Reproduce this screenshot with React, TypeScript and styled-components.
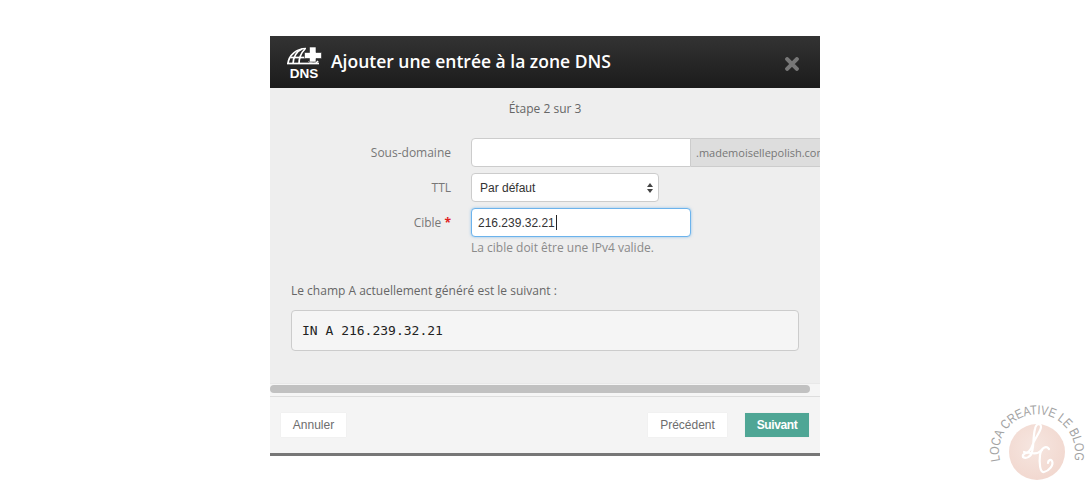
import { createGlobalStyle, styled } from 'styled-components'

const GlobalStyle = createGlobalStyle`
  html, body {
    margin: 0;
    padding: 0;
    background: #fff;
  }
  body {
    font-family: 'Open Sans', sans-serif;
  }
`

const Page = styled.div`
  position: relative;
  width: 1090px;
  height: 492px;
  padding: 36px 0 0 270px;
  box-sizing: border-box;
  overflow: hidden;
`

const Modal = styled.div`
  width: 550px;
  height: 420px;
  display: flex;
  flex-direction: column;
  overflow: hidden;
  background: #eee;
  border-bottom: 3px solid #777;
  box-sizing: border-box;
`

const Header = styled.div`
  height: 52px;
  flex: none;
  display: flex;
  align-items: center;
  padding: 0 19px 0 17px;
  background: linear-gradient(#333, #1b1b1b);
`

const LogoIcon = styled.svg`
  width: 35px;
  height: 36px;
  margin-top: 4px;
  flex: none;
`

const Title = styled.h3`
  margin: -2px 0 0 9px;
  flex: 1;
  color: #fff;
  font-size: 17.5px;
  font-weight: 600;
  line-height: 52px;
`

const Close = styled.svg`
  width: 14px;
  height: 14px;
  margin: 3px 2px 0 0;
`

const Body = styled.div`
  flex: 1;
  display: flex;
  flex-direction: column;
`

const Step = styled.div`
  margin-top: 12px;
  text-align: center;
  color: #666;
  font-size: 12px;
  font-weight: 400;
  line-height: 17px;
`

const Form = styled.div`
  margin-top: 21px;
  display: flex;
  flex-direction: column;
  gap: 6px;
`

const Row = styled.div`
  display: flex;
  align-items: center;
`

const Label = styled.label`
  width: 181px;
  flex: none;
  text-align: right;
  color: #777;
  font-size: 12px;
  line-height: 17px;
`

const Required = styled.span`
  color: #e02020;
  font-weight: 700;
`

const Control = styled.div<{ $focused?: boolean; $width: number; $joined?: boolean }>`
  margin-left: 20px;
  width: ${({ $width }) => $width}px;
  height: 29px;
  flex: none;
  box-sizing: border-box;
  display: flex;
  align-items: center;
  padding: 0 5px 0 6px;
  background: #fff;
  color: #333;
  font-family: 'Liberation Sans', sans-serif;
  font-size: 12px;
  border: 1px solid ${({ $focused }) => ($focused ? '#6cb3ec' : '#ccc')};
  border-radius: ${({ $joined }) => ($joined ? '4px 0 0 4px' : '4px')};
  box-shadow: ${({ $focused }) => ($focused ? '0 0 3px rgba(102, 175, 233, 0.7)' : 'none')};
`

const SelectValue = styled.span`
  flex: 1;
  padding-left: 2px;
`

const Caret = styled.span`
  width: 1px;
  height: 15px;
  margin-left: 1px;
  background: #222;
`

const Addon = styled.div`
  width: 129px;
  height: 29px;
  flex: none;
  box-sizing: border-box;
  display: flex;
  align-items: center;
  padding-left: 5px;
  overflow: hidden;
  white-space: nowrap;
  background: #ddd;
  border: 1px solid #ccc;
  border-left: none;
  border-right: none;
  color: #777;
  font-size: 11px;
`

const Help = styled.div`
  margin: 2px 0 0 201px;
  color: #8a8a8a;
  font-size: 12px;
  line-height: 17px;
`

const Generated = styled.div`
  margin: 26px 21px 0;
`

const GeneratedLabel = styled.div`
  color: #666;
  font-size: 12px;
  line-height: 17px;
`

const Code = styled.pre`
  margin: 11px 0 0;
  height: 41px;
  box-sizing: border-box;
  padding: 0 10px;
  display: flex;
  align-items: center;
  background: #f5f5f5;
  border: 1px solid #ccc;
  border-radius: 4px;
  color: #222;
  font-family: 'DejaVu Sans Mono', monospace;
  font-size: 13px;
`

const ScrollTrack = styled.div`
  margin-top: 32px;
  height: 13px;
  box-sizing: border-box;
  padding: 1px 10px 0 0;
  background: #f5f5f5;
  border-top: 1px solid #e8e8e8;
`

const ScrollThumb = styled.div`
  height: 8px;
  background: #c1c1c1;
  border-radius: 4px;
`

const Footer = styled.div`
  flex: 1;
  display: flex;
  align-items: center;
  gap: 18px;
  padding: 0 11px;
  background: #f4f4f4;
  border-top: 1px solid #ddd;
`

const Button = styled.button<{ $primary?: boolean; $push?: boolean; $width: number }>`
  width: ${({ $width }) => $width}px;
  height: 24px;
  padding: 0;
  margin-left: ${({ $push }) => ($push ? 'auto' : '0')};
  border: none;
  border-radius: 0;
  background: ${({ $primary }) => ($primary ? '#4fa695' : '#fff')};
  color: ${({ $primary }) => ($primary ? '#fff' : '#6d6d6d')};
  font-family: 'Liberation Sans', sans-serif;
  font-size: 12px;
  font-weight: ${({ $primary }) => ($primary ? 700 : 400)};
  letter-spacing: ${({ $primary }) => ($primary ? '-0.4px' : '0')};
  box-shadow: 0 0 1px rgba(0, 0, 0, 0.08);
`

const Badge = styled.svg`
  position: absolute;
  left: 988px;
  top: 402px;
  width: 102px;
  height: 84px;
`

const DnsIcon = () => (
  <LogoIcon viewBox="0 0 35 36">
    <g fill="none" stroke="#fff" strokeWidth="1.700">
      <path d="M1 18 C1.500 9 10 2.500 19 2.500" />
      <path d="M6 18 C6 11 10 5 15 3" />
      <path d="M12 18 C12 12 14 7 18 3" />
      <path d="M3.500 11.500 H19" />
      <path d="M0 17.500 H32" />
      <path d="M22 15 C24 18 29 18 31 15" />
    </g>
    <path d="M22.500 1 H29 V6.500 H34.500 V12.500 H29 V16 H22.500 V12.500 H17.500 V6.500 H22.500 Z" fill="#fff" stroke="#282828" strokeWidth="0.6" />
    <text x="17" y="31.500" textAnchor="middle" fill="#fff" fontFamily="'Liberation Sans', sans-serif" fontSize="13.500" fontWeight="700">
      DNS
    </text>
  </LogoIcon>
)

const App = () => (
  <>
    <GlobalStyle />
    <Page>
      <Modal>
        <Header>
          <DnsIcon />
          <Title>Ajouter une entrée à la zone DNS</Title>
          <Close viewBox="0 0 13 13">
            <path d="M2 2 L11 11 M11 2 L2 11" stroke="#777" strokeWidth="3.800" strokeLinecap="round" />
          </Close>
        </Header>
        <Body>
          <Step>Étape 2 sur 3</Step>
          <Form>
            <Row>
              <Label>Sous-domaine</Label>
              <Control $width={220} $joined />
              <Addon>.mademoisellepolish.com</Addon>
            </Row>
            <Row>
              <Label>TTL</Label>
              <Control $width={188}>
                <SelectValue>Par défaut</SelectValue>
                <svg width="6" height="10" viewBox="0 0 6 10">
                  <path d="M3 0 L6 4 H0 Z M3 10 L0 6 H6 Z" fill="#444" />
                </svg>
              </Control>
            </Row>
            <Row>
              <Label>
                Cible <Required>*</Required>
              </Label>
              <Control $width={220} $focused>
                216.239.32.21
                <Caret />
              </Control>
            </Row>
          </Form>
          <Help>La cible doit être une IPv4 valide.</Help>
          <Generated>
            <GeneratedLabel>Le champ A actuellement généré est le suivant :</GeneratedLabel>
            <Code>IN A 216.239.32.21</Code>
          </Generated>
          <ScrollTrack>
            <ScrollThumb />
          </ScrollTrack>
          <Footer>
            <Button $width={65}>Annuler</Button>
            <Button $width={79} $push>
              Précédent
            </Button>
            <Button $width={64} $primary>
              Suivant
            </Button>
          </Footer>
        </Body>
      </Modal>
      <Badge viewBox="0 0 102 84">
        <defs>
          <radialGradient id="blush" cx="45%" cy="40%" r="70%">
            <stop offset="0%" stopColor="#f6e6e0" />
            <stop offset="100%" stopColor="#f1d6cd" />
          </radialGradient>
          <path id="arc" d="M12 59 A 38 38 0 1 1 86 59" />
        </defs>
        <circle cx="49" cy="50" r="28" fill="url(#blush)" />
        <text fill="#a3a3a3" fontFamily="'Liberation Sans', sans-serif" fontSize="13">
          <textPath href="#arc" textLength="136" lengthAdjust="spacingAndGlyphs">
            LOCA CREATIVE LE BLOG
          </textPath>
        </text>
        <g fill="none" stroke="#fff" strokeWidth="2.200" strokeLinecap="round">
          <path d="M36 50 C40 52 43 48 45 42 C47 36 53 29 53 25 C53 21 48 21 47 27 C45 34 46 43 44 50 C43 55 38 57 35 55 C34 52 38 50 43 51 C47 52 51 51 54 48" />
          <path d="M61 47 C58 43 53 46 52 53 C51 61 52 71 56 70 C61 69 66 63 64 59 C63 57 60 58 60 61" />
        </g>
      </Badge>
    </Page>
  </>
)

export default App
